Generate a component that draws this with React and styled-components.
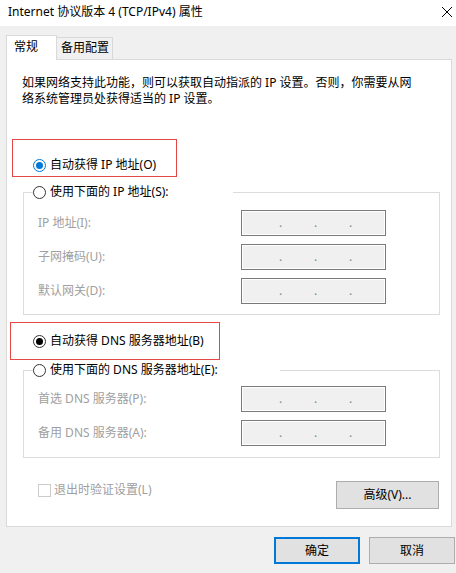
import React from 'react';
import styled, { createGlobalStyle } from 'styled-components';

const FONT = `"Noto Sans", "Noto Sans CJK SC", sans-serif`;

const GlobalStyle = createGlobalStyle`
    html, body {
        margin: 0;
        padding: 0;
        background: #f0f0f0;
    }
    * {
        box-sizing: border-box;
    }
`;

const Dialog = styled.div`
    width: 456px;
    height: 573px;
    overflow: hidden;
    background: #f0f0f0;
    font-family: ${FONT};
    font-size: 12px;
    color: #000;
`;

const TitleBar = styled.div`
    height: 26px;
    background: #fff;
    display: flex;
    align-items: center;
    justify-content: space-between;
    padding: 0 4px 2px 8px;
    line-height: 16px;
`;

const CloseIcon = () => (
    <svg width="10" height="10" viewBox="0 0 10 10">
        <path d="M0 0 L10 10 M10 0 L0 10" stroke="#000" strokeWidth="1" fill="none" />
    </svg>
);

const TabStrip = styled.div`
    display: flex;
    align-items: flex-end;
    height: 24px;
    margin: 9px 0 0 6px;
`;

const Tab = styled.div`
    position: relative;
    line-height: 16px;
    border: 1px solid #d9d9d9;
    border-bottom: none;
    ${p => p.$active ? `
        z-index: 1;
        width: 51px;
        height: 25px;
        margin-bottom: -1px;
        padding: 3px 0 0 7px;
        background: #fff;
    ` : `
        width: 56px;
        height: 22px;
        border-left: none;
        padding: 2px 0 0 4px;
        background: #f0f0f0;
    `}
`;

const Panel = styled.div`
    width: 446px;
    height: 468px;
    margin-left: 6px;
    padding-top: 15px;
    background: #fff;
    border: 1px solid #d9d9d9;
`;

const Intro = styled.p`
    margin: 0 0 0 15px;
    line-height: 16px;
    white-space: nowrap;

    span {
        display: block;
    }
`;

const Highlight = styled.div`
    width: ${p => p.$w}px;
    margin: ${p => p.$mt}px 0 0 ${p => p.$ml}px;
    padding: ${p => p.$pt}px 0 ${p => p.$pb}px ${p => p.$pl}px;
    border: 1px solid #e54646;
`;

const OptionRow = styled.label`
    display: flex;
    align-items: center;
    gap: 4px;
    height: 16px;
    line-height: 16px;
    white-space: nowrap;
`;

const RadioCircle = styled.span`
    flex: none;
    width: 13px;
    height: 13px;
    border-radius: 50%;
    border: 1px solid ${p => p.$accent ? '#0078d7' : '#333'};
    background: #fff;
    display: flex;
    align-items: center;
    justify-content: center;

    &::after {
        content: '';
        display: ${p => p.$checked ? 'block' : 'none'};
        width: 7px;
        height: 7px;
        border-radius: 50%;
        background: ${p => p.$accent ? '#0078d7' : '#000'};
    }
`;

const GroupBox = styled.div`
    width: 417px;
    margin: ${p => p.$mt}px 0 0 16px;
    border: 1px solid #dcdcdc;
`;

const GroupLegend = styled(OptionRow)`
    width: ${p => p.$w}px;
    margin: -9px 0 0 9px;
    background: #fff;
`;

const FieldGrid = styled.div`
    display: grid;
    grid-template-columns: 203px 145px;
    grid-auto-rows: 26px;
    row-gap: 8px;
    align-items: center;
    margin-left: 14px;
    padding: ${p => p.$pt}px 0 ${p => p.$pb}px;
`;

const FieldLabel = styled.span`
    color: #a0a0a0;
    line-height: 16px;
    white-space: nowrap;
`;

const IpBox = styled.div`
    height: 26px;
    border: 1px solid #7a7a7a;
    box-shadow: inset 0 0 0 1px #fff;
    background: #f0f0f0;
    display: flex;
    gap: 33px;
    padding-left: 37px;
    line-height: 24px;
    color: #7d8796;
`;

const IpDot = styled.span`
    width: 2px;
    overflow: visible;
`;

const BottomRow = styled.div`
    display: flex;
    justify-content: space-between;
    align-items: flex-start;
    margin-top: 23px;
    padding: 0 12px 0 31px;
`;

const CheckLabel = styled.label`
    display: flex;
    align-items: center;
    gap: 3px;
    height: 16px;
    margin-top: 1px;
    color: #a0a0a0;
    line-height: 16px;
`;

const CheckBox = styled.span`
    width: 13px;
    height: 13px;
    border: 1px solid #cccccc;
    background: #fff;
`;

const Button = styled.button`
    width: ${p => p.$w}px;
    height: ${p => p.$h}px;
    padding: 0;
    background: #e1e1e1;
    border: ${p => p.$primary ? '2px solid #0078d7' : '1px solid #adadad'};
    font-family: ${FONT};
    font-size: 12px;
    line-height: 16px;
    color: #000;
`;

const Footer = styled.div`
    display: flex;
    justify-content: flex-end;
    gap: 9px;
    margin-top: 10px;
    padding-right: 1px;
`;

const Radio = ({ checked, accent, children }) => (
    <>
        <RadioCircle $checked={checked} $accent={accent} />
        <span>{children}</span>
    </>
);

const IpField = () => (
    <IpBox>
        <IpDot>.</IpDot>
        <IpDot>.</IpDot>
        <IpDot>.</IpDot>
    </IpBox>
);

const ipRows = ['IP 地址(I):', '子网掩码(U):', '默认网关(D):'];
const dnsRows = ['首选 DNS 服务器(P):', '备用 DNS 服务器(A):'];

function App() {
    return (
        <Dialog>
            <GlobalStyle />
            <TitleBar>
                <span>Internet 协议版本 4 (TCP/IPv4) 属性</span>
                <CloseIcon />
            </TitleBar>

            <TabStrip>
                <Tab $active>常规</Tab>
                <Tab>备用配置</Tab>
            </TabStrip>

            <Panel>
                <Intro>
                    <span>如果网络支持此功能，则可以获取自动指派的 IP 设置。否则，你需要从网</span>
                    <span>络系统管理员处获得适当的 IP 设置。</span>
                </Intro>

                <Highlight $w={165} $mt={32} $ml={5} $pt={17} $pb={3} $pl={20}>
                    <OptionRow>
                        <Radio checked accent>自动获得 IP 地址(O)</Radio>
                    </OptionRow>
                </Highlight>

                <GroupBox $mt={15}>
                    <GroupLegend $w={200}>
                        <Radio>使用下面的 IP 地址(S):</Radio>
                    </GroupLegend>
                    <FieldGrid $pt={10} $pb={10}>
                        {ipRows.map((label) => (
                            <React.Fragment key={label}>
                                <FieldLabel>{label}</FieldLabel>
                                <IpField />
                            </React.Fragment>
                        ))}
                    </FieldGrid>
                </GroupBox>

                <Highlight $w={210} $mt={7} $ml={3} $pt={10} $pb={10} $pl={22}>
                    <OptionRow>
                        <Radio checked>自动获得 DNS 服务器地址(B)</Radio>
                    </OptionRow>
                </Highlight>

                <GroupBox $mt={10}>
                    <GroupLegend $w={247}>
                        <Radio>使用下面的 DNS 服务器地址(E):</Radio>
                    </GroupLegend>
                    <FieldGrid $pt={8} $pb={11}>
                        {dnsRows.map((label) => (
                            <React.Fragment key={label}>
                                <FieldLabel>{label}</FieldLabel>
                                <IpField />
                            </React.Fragment>
                        ))}
                    </FieldGrid>
                </GroupBox>

                <BottomRow>
                    <CheckLabel>
                        <CheckBox />
                        <span>退出时验证设置(L)</span>
                    </CheckLabel>
                    <Button $w={103} $h={28}>高级(V)...</Button>
                </BottomRow>
            </Panel>

            <Footer>
                <Button $w={86} $h={27} $primary>确定</Button>
                <Button $w={86} $h={27}>取消</Button>
            </Footer>
        </Dialog>
    );
}

export default App;
